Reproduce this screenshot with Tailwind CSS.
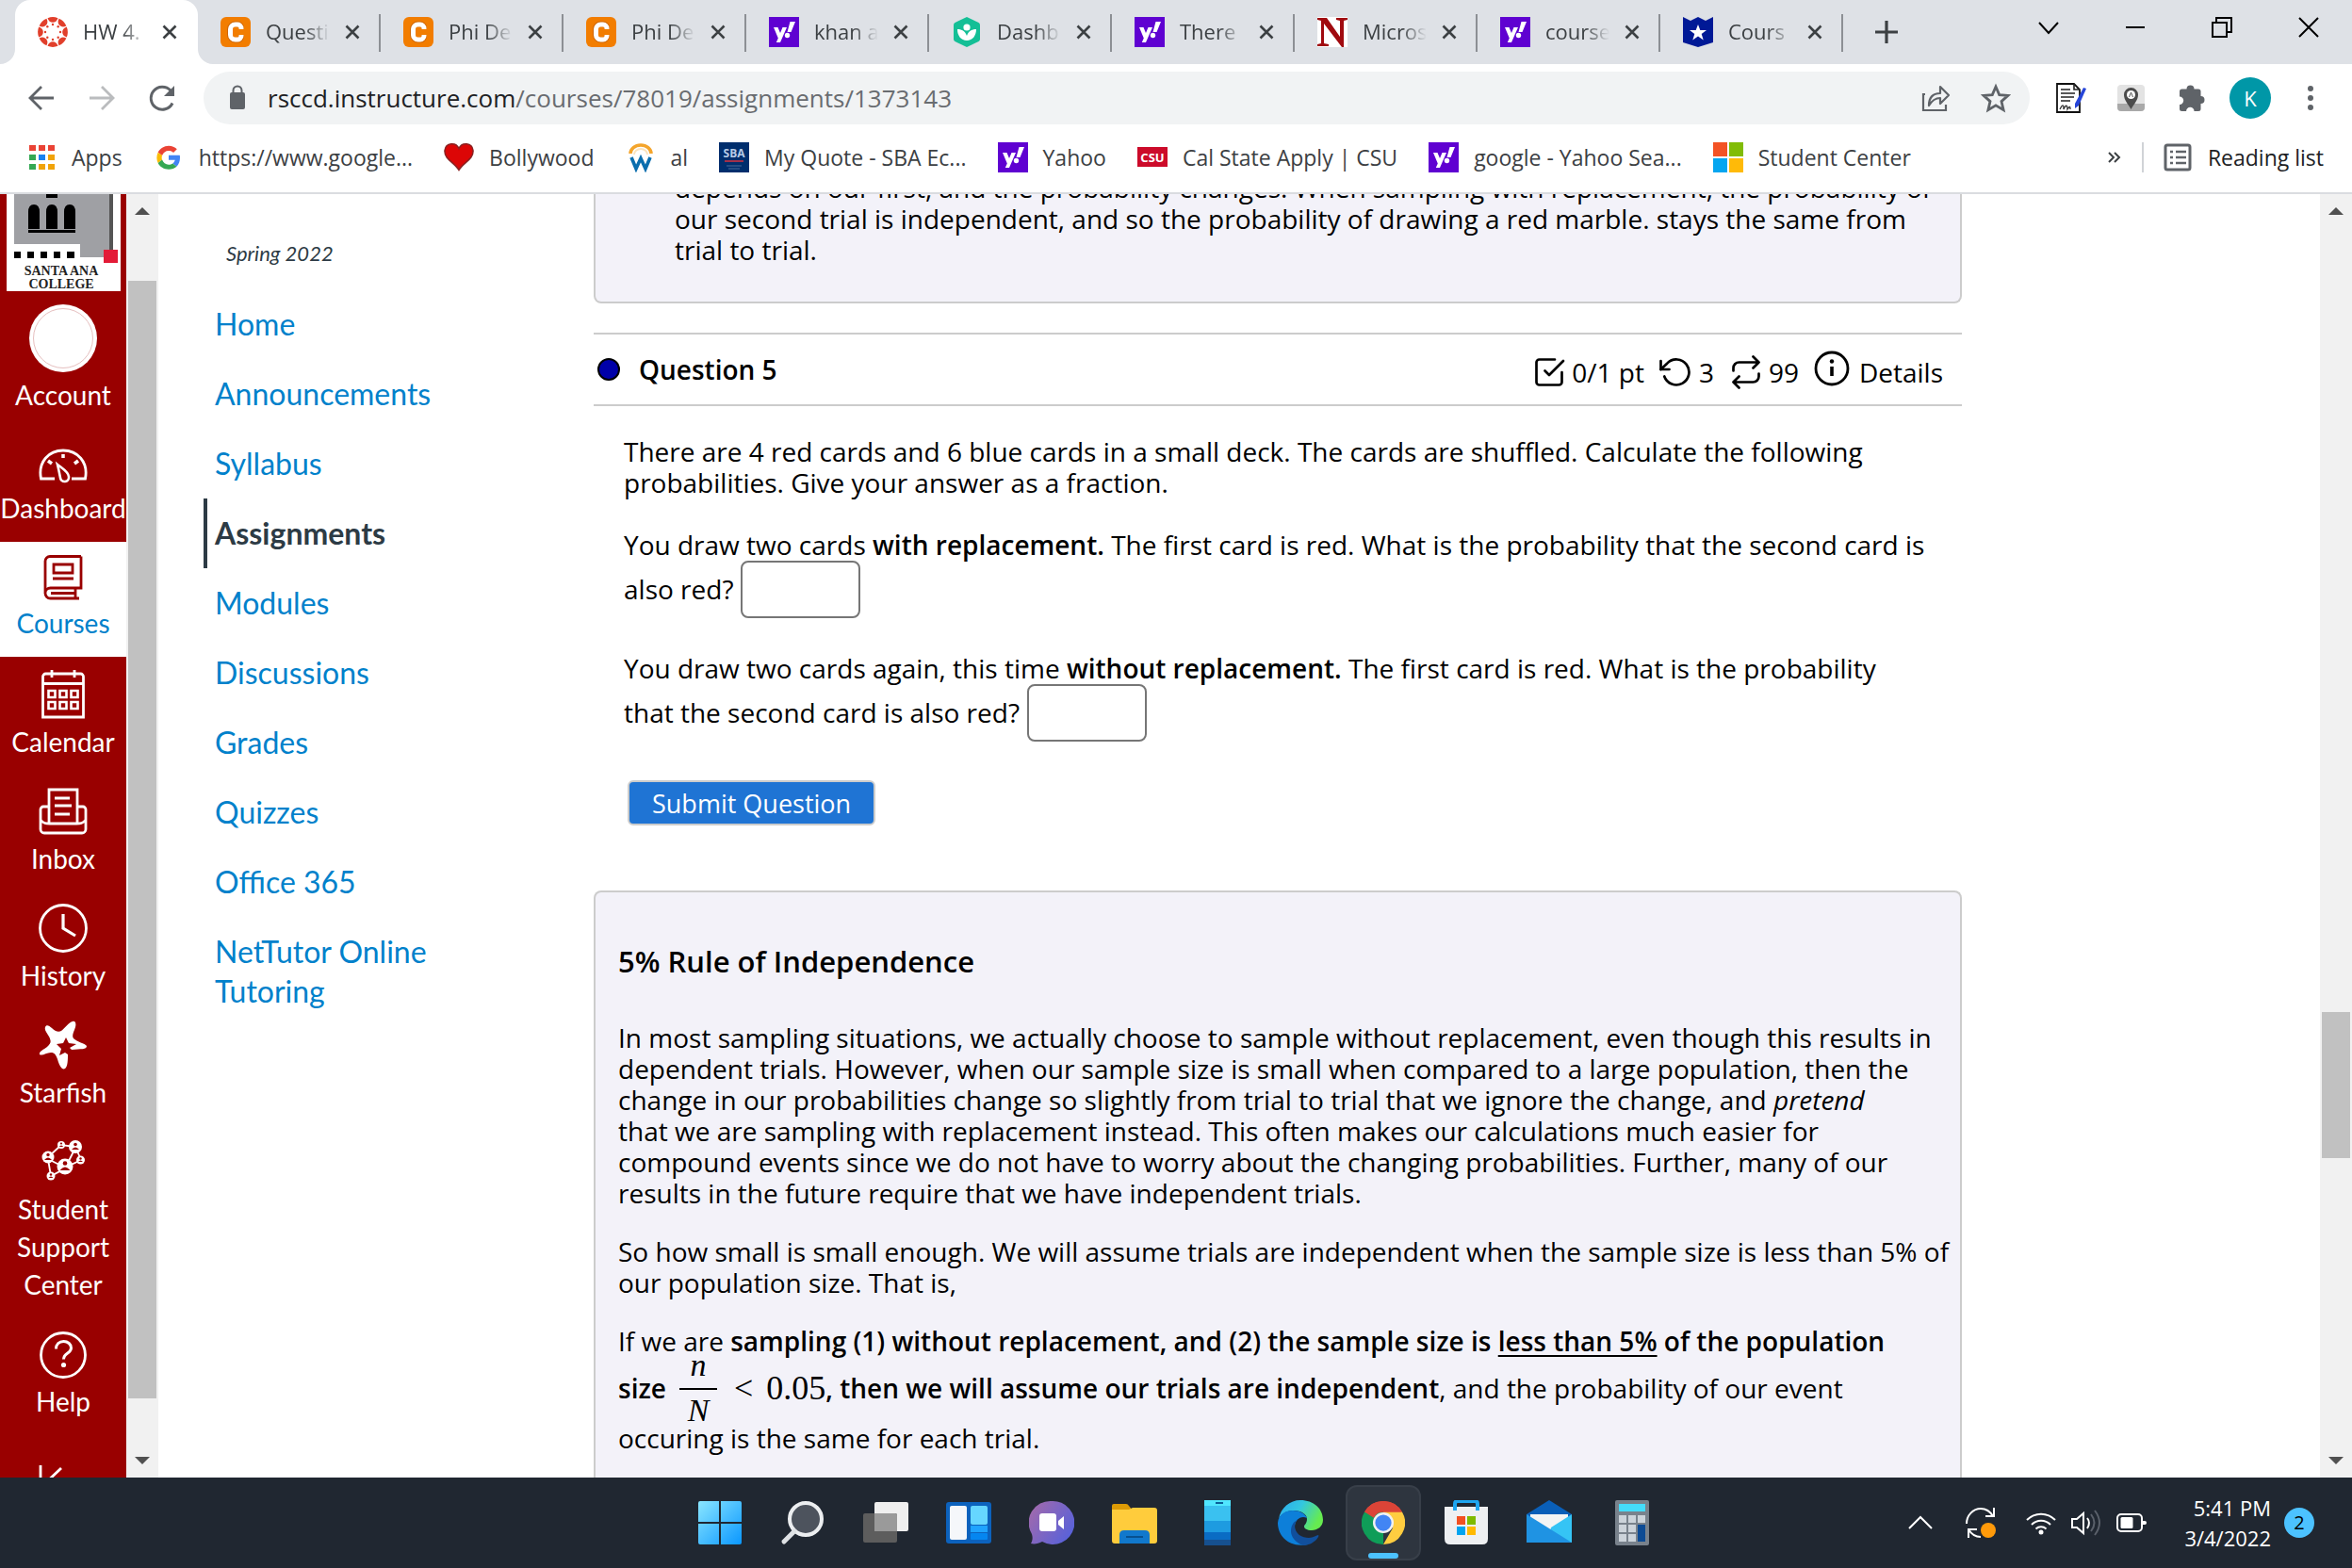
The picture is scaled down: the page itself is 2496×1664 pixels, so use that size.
<!DOCTYPE html>
<html lang="en">

<head>
    <meta charset="UTF-8">
    <meta name="viewport" content="width=device-width, initial-scale=1.0">
    <title>HW 4.2</title>
    <script src="https://cdn.jsdelivr.net/npm/@tailwindcss/browser@4"></script>
</head>

<body class="h-screen flex flex-col overflow-hidden bg-white font-['Open_Sans',sans-serif] text-[#3c4043]">

    <!-- shared icons -->
    <svg class="hidden">
        <symbol id="x" viewBox="0 0 16 16"><path d="M1.500 1.500l13 13M14.500 1.500l-13 13" stroke="#3c4043" stroke-width="2.600" fill="none" /></symbol>
        <symbol id="chegg" viewBox="0 0 32 32"><rect width="32" height="32" rx="6" fill="#f27d00" /><path d="M22 13V11.500a4 4 0 0 0-4-4h-2.500a5.500 5.500 0 0 0-5.500 5.500v6a5.500 5.500 0 0 0 5.500 5.500H18a4 4 0 0 0 4-4V19" stroke="#cf6500" stroke-width="6" fill="none" /><path d="M22 13V12a4 4 0 0 0-4-4h-2.500a5 5 0 0 0-5 5v6a5 5 0 0 0 5 5H18a4 4 0 0 0 4-4v-1" stroke="#fff" stroke-width="5" fill="none" /></symbol>
        <symbol id="yahoo" viewBox="0 0 32 32"><rect width="32" height="32" fill="#5f01d1" /><path d="M5 11h4.500l2.500 6 2.500-6H19l-7 16H7.800l2-4.500z M22.500 5H28l-4.500 11h-4z" fill="#fff" /><circle cx="19.500" cy="19.500" r="2.700" fill="#fff" /></symbol>
    </svg>

    <!-- tab strip -->
    <header class="h-[68px] shrink-0 bg-[#dee1e6] flex pl-4 text-[22px]">
        <div class="relative w-[194px] shrink-0 bg-white rounded-t-2xl flex items-center gap-4 pl-6 pr-[22px] pb-px">
            <svg class="absolute -left-4 bottom-0 size-4" viewBox="0 0 16 16"><path d="M16 0v16H0A16 16 0 0 0 16 0z" fill="#fff" /></svg>
            <svg class="absolute -right-4 bottom-0 size-4" viewBox="0 0 16 16"><path d="M0 0v16h16A16 16 0 0 1 0 0z" fill="#fff" /></svg>
            <svg class="size-8 shrink-0" viewBox="0 0 32 32">
                <g fill="#e13f2b">
                    <path id="seg" d="M10.500 1.200q5.500-2.200 11 0-1.500 4.600-5.500 4.600t-5.500-4.600z" />
                    <use href="#seg" transform="rotate(45 16 16)" /><use href="#seg" transform="rotate(90 16 16)" /><use href="#seg" transform="rotate(135 16 16)" /><use href="#seg" transform="rotate(180 16 16)" /><use href="#seg" transform="rotate(225 16 16)" /><use href="#seg" transform="rotate(270 16 16)" /><use href="#seg" transform="rotate(315 16 16)" />
                    <circle cx="16" cy="8" r="1.200" /><circle cx="21.700" cy="10.300" r="1.200" /><circle cx="24" cy="16" r="1.200" /><circle cx="21.700" cy="21.700" r="1.200" /><circle cx="16" cy="24" r="1.200" /><circle cx="10.300" cy="21.700" r="1.200" /><circle cx="8" cy="16" r="1.200" /><circle cx="10.300" cy="10.300" r="1.200" />
                </g>
            </svg>
            <span class="flex-1 min-w-0 whitespace-nowrap mask-r-from-60%">HW 4.</span>
            <button aria-label="Close tab" class="size-4 shrink-0"><svg class="size-4"><use href="#x" /></svg></button>
        </div>
        <div class="w-[194px] shrink-0 flex items-center gap-4 pl-6 pr-[22px] pb-px relative after:absolute after:right-0 after:top-[15px] after:h-10 after:w-0.5 after:bg-[#8c8f94]">
            <svg class="size-8 shrink-0"><use href="#chegg" /></svg>
            <span class="flex-1 min-w-0 whitespace-nowrap mask-r-from-60%">Questi</span>
            <button aria-label="Close tab" class="size-4 shrink-0"><svg class="size-4"><use href="#x" /></svg></button>
        </div>
        <div class="w-[194px] shrink-0 flex items-center gap-4 pl-6 pr-[22px] pb-px relative after:absolute after:right-0 after:top-[15px] after:h-10 after:w-0.5 after:bg-[#8c8f94]">
            <svg class="size-8 shrink-0"><use href="#chegg" /></svg>
            <span class="flex-1 min-w-0 whitespace-nowrap mask-r-from-60%">Phi De</span>
            <button aria-label="Close tab" class="size-4 shrink-0"><svg class="size-4"><use href="#x" /></svg></button>
        </div>
        <div class="w-[194px] shrink-0 flex items-center gap-4 pl-6 pr-[22px] pb-px relative after:absolute after:right-0 after:top-[15px] after:h-10 after:w-0.5 after:bg-[#8c8f94]">
            <svg class="size-8 shrink-0"><use href="#chegg" /></svg>
            <span class="flex-1 min-w-0 whitespace-nowrap mask-r-from-60%">Phi De</span>
            <button aria-label="Close tab" class="size-4 shrink-0"><svg class="size-4"><use href="#x" /></svg></button>
        </div>
        <div class="w-[194px] shrink-0 flex items-center gap-4 pl-6 pr-[22px] pb-px relative after:absolute after:right-0 after:top-[15px] after:h-10 after:w-0.5 after:bg-[#8c8f94]">
            <svg class="size-8 shrink-0"><use href="#yahoo" /></svg>
            <span class="flex-1 min-w-0 whitespace-nowrap mask-r-from-60%">khan a</span>
            <button aria-label="Close tab" class="size-4 shrink-0"><svg class="size-4"><use href="#x" /></svg></button>
        </div>
        <div class="w-[194px] shrink-0 flex items-center gap-4 pl-6 pr-[22px] pb-px relative after:absolute after:right-0 after:top-[15px] after:h-10 after:w-0.5 after:bg-[#8c8f94]">
            <svg class="size-8 shrink-0" viewBox="0 0 32 32"><path d="M16 0l12.500 6q1.500.8 1.500 2.500v15q0 1.700-1.500 2.500L16 32 3.500 26Q2 25.200 2 23.500v-15Q2 6.800 3.500 6z" fill="#14bf96" /><circle cx="16" cy="11" r="3.600" fill="#fff" /><path d="M6 13c5 0 8.500 2.500 10 7 1.500-4.500 5-7 10-7 0 7-4 12-10 12S6 20 6 13z" fill="#fff" /></svg>
            <span class="flex-1 min-w-0 whitespace-nowrap mask-r-from-60%">Dashb</span>
            <button aria-label="Close tab" class="size-4 shrink-0"><svg class="size-4"><use href="#x" /></svg></button>
        </div>
        <div class="w-[194px] shrink-0 flex items-center gap-4 pl-6 pr-[22px] pb-px relative after:absolute after:right-0 after:top-[15px] after:h-10 after:w-0.5 after:bg-[#8c8f94]">
            <svg class="size-8 shrink-0"><use href="#yahoo" /></svg>
            <span class="flex-1 min-w-0 whitespace-nowrap mask-r-from-60%">There</span>
            <button aria-label="Close tab" class="size-4 shrink-0"><svg class="size-4"><use href="#x" /></svg></button>
        </div>
        <div class="w-[194px] shrink-0 flex items-center gap-4 pl-6 pr-[22px] pb-px relative after:absolute after:right-0 after:top-[15px] after:h-10 after:w-0.5 after:bg-[#8c8f94]">
            <svg class="size-8 shrink-0" viewBox="0 0 32 32"><rect width="32" height="32" fill="#fff" /><path d="M0 1h10l14 20V4l-4-1V1h12v2l-4 1v28h-2L7 7v21l5 1v2H0v-2l4-1V4L0 3z" fill="#a00a0f" /></svg>
            <span class="flex-1 min-w-0 whitespace-nowrap mask-r-from-60%">Micros</span>
            <button aria-label="Close tab" class="size-4 shrink-0"><svg class="size-4"><use href="#x" /></svg></button>
        </div>
        <div class="w-[194px] shrink-0 flex items-center gap-4 pl-6 pr-[22px] pb-px relative after:absolute after:right-0 after:top-[15px] after:h-10 after:w-0.5 after:bg-[#8c8f94]">
            <svg class="size-8 shrink-0"><use href="#yahoo" /></svg>
            <span class="flex-1 min-w-0 whitespace-nowrap mask-r-from-60%">course</span>
            <button aria-label="Close tab" class="size-4 shrink-0"><svg class="size-4"><use href="#x" /></svg></button>
        </div>
        <div class="w-[194px] shrink-0 flex items-center gap-4 pl-6 pr-[22px] pb-px relative after:absolute after:right-0 after:top-[15px] after:h-10 after:w-0.5 after:bg-[#8c8f94]">
            <svg class="size-8 shrink-0" viewBox="0 0 32 32"><path d="M0 0l8 4 8-4 8 4 8-4v27l-16 5-16-5z" fill="#001996" /><path d="M16 8l2.300 6H25l-5.300 4 2 6.500L16 20.500l-5.700 4 2-6.500L7 14h6.700z" fill="#fff" /></svg>
            <span class="flex-1 min-w-0 whitespace-nowrap mask-r-from-60%">Cours</span>
            <button aria-label="Close tab" class="size-4 shrink-0"><svg class="size-4"><use href="#x" /></svg></button>
        </div>
        <button aria-label="New tab" class="ml-[34px] size-6 mt-[22px]"><svg viewBox="0 0 24 24"><path d="M12 0v24M0 12h24" stroke="#3c4043" stroke-width="3.200" /></svg></button>
        <div class="ml-auto flex gap-[70px] pr-[35px] pt-[18px]">
            <button aria-label="Search tabs" class="size-[22px]"><svg viewBox="0 0 22 22"><path d="M1 6l10 11L21 6" stroke="#000" stroke-width="2" fill="none" /></svg></button>
            <button aria-label="Minimize" class="size-[22px]"><svg viewBox="0 0 22 22"><path d="M1 11h20" stroke="#000" stroke-width="2" fill="none" /></svg></button>
            <button aria-label="Restore" class="size-[22px]"><svg viewBox="0 0 22 22"><path d="M1 6h15v15H1zM5 5.500V1h16v15h-4.500" stroke="#000" stroke-width="2" fill="none" /></svg></button>
            <button aria-label="Close" class="size-[22px]"><svg viewBox="0 0 22 22"><path d="M1 1l20 20M21 1L1 21" stroke="#000" stroke-width="2" fill="none" /></svg></button>
        </div>
    </header>

    <!-- toolbar -->
    <div class="h-[72px] shrink-0 flex items-center pl-7 pr-[30px]">
        <button aria-label="Back" class="size-8"><svg viewBox="0 0 32 32"><path d="M29 16H4M16 4L4 16l12 12" stroke="#5f6368" stroke-width="2.800" fill="none" /></svg></button>
        <button aria-label="Forward" class="size-8 ml-8"><svg viewBox="0 0 32 32"><path d="M3 16h25M16 4l12 12-12 12" stroke="#babcbe" stroke-width="2.800" fill="none" /></svg></button>
        <button aria-label="Reload" class="size-8 ml-8"><svg viewBox="0 0 32 32"><path d="M27 21.500A12 12 0 1 1 25 8" stroke="#5f6368" stroke-width="3" fill="none" /><path d="M29 3v11H18z" fill="#5f6368" /></svg></button>
        <div class="flex-1 h-14 ml-7 mr-7 rounded-full bg-[#f1f3f4] flex items-center pl-6 pr-5">
            <svg class="w-6 h-7" viewBox="0 0 24 28"><rect x="4" y="8" width="16" height="18" rx="2" fill="#5f6368" /><path d="M7.500 9V6a4.500 4.500 0 0 1 9 0v3" stroke="#5f6368" stroke-width="2" fill="none" /></svg>
            <p class="ml-5 text-[26px] text-[#696c70]"><span class="text-[#202124]">rsccd.instructure.com</span>/courses/78019/assignments/1373143</p>
            <button aria-label="Share" class="size-8 ml-auto"><svg viewBox="0 0 32 32"><path d="M5 12H3v17h24v-6" stroke="#5f6368" stroke-width="2.200" fill="none" /><path d="M9 24c0-8 4-13 12-13V4l9 9-9 9v-6c-6 0-9 3-12 8z" stroke="#5f6368" stroke-width="2.200" fill="none" stroke-linejoin="round" /></svg></button>
            <button aria-label="Bookmark this tab" class="size-8 ml-8"><svg viewBox="0 0 32 32"><path d="M16 4l3.700 8.600 9.300.8-7 6.200 2.100 9.100L16 23.800l-8.100 4.900L10 19.600l-7-6.200 9.300-.8z" stroke="#5f6368" stroke-width="2.800" fill="none" /></svg></button>
        </div>
        <svg class="size-8" viewBox="0 0 32 32"><path d="M1 1h18l6 6v24H1z" fill="#fff" stroke="#111" stroke-width="1.800" /><path d="M19 1v6h6M5 7h10M5 11h15M5 15h14M5 19h10" stroke="#222" stroke-width="1.600" fill="none" /><path d="M4 28c3-6 4-5 4 0 2-5 4-5 4 0 2-3 3-4 3 0" stroke="#333" stroke-width="1.300" fill="none" /><path d="M29 5l3 1-8 18-4 3v-5z" fill="#2645d8" /></svg>
        <svg class="size-8 ml-8" viewBox="0 0 32 32"><rect x="1" y="2" width="29" height="28" rx="4" fill="#e3e3e3" /><path d="M1 22h29v4a4 4 0 0 1-4 4H5a4 4 0 0 1-4-4z" fill="#a9a9a9" /><path d="M15.500 28C12 22 8 18 8 12.500a7.500 7.500 0 0 1 15 0C23 18 19 22 15.500 28z" fill="#4b4b4b" /><circle cx="15.500" cy="12.500" r="4.500" fill="#fff" /><path d="M13.500 15l2-5 2 5" stroke="#555" fill="none" /></svg>
        <svg class="size-8 ml-8" viewBox="0 0 32 32"><path d="M10.500 6.500a4 4 0 0 1 8 0H23a2.500 2.500 0 0 1 2.500 2.500v5a4 4 0 0 1 0 8v5.500A2.500 2.500 0 0 1 23 30h-4.500a4.200 4.200 0 0 0-8.400 0H5.500A2.500 2.500 0 0 1 3 27.500V23a4.200 4.200 0 0 0 0-8.400V9a2.500 2.500 0 0 1 2.500-2.500z" fill="#5f6368" /></svg>
        <button aria-label="Profile" class="size-11 ml-6 rounded-full bg-[#0097a7] text-white text-[22px]">K</button>
        <button aria-label="Menu" class="w-7 h-8 ml-7"><svg viewBox="0 0 28 32"><g fill="#5f6368"><circle cx="14" cy="6" r="3" /><circle cx="14" cy="16" r="3" /><circle cx="14" cy="26" r="3" /></g></svg></button>
    </div>

    <!-- bookmarks bar -->
    <nav class="h-[66px] shrink-0 border-b-2 border-[#dadce0] flex items-center gap-[33px] pl-7 pr-[30px] pb-2.5 text-[23px] whitespace-nowrap">
        <a href="#" class="flex items-center gap-4"><svg class="size-8" viewBox="0 0 32 32"><path d="M3 3h7v6H3zM13 3h7v6h-7zM23 3h7v6h-7z" fill="#ea4335" /><path d="M3 13h7v6H3zM3 23h7v6H3z" fill="#34a853" /><path d="M13 13h7v6h-7z" fill="#1a82f0" /><path d="M23 13h7v6h-7zM13 23h7v6h-7zM23 23h7v6h-7z" fill="#f0a30a" /></svg>Apps</a>
        <a href="#" class="flex items-center gap-4"><svg class="size-8" viewBox="0 0 48 48"><path fill="#ea4335" d="M24 13.500c3 0 5.500 1 7.500 3l5.700-5.700C33.700 7.500 29.300 5.500 24 5.500 16.500 5.500 10 9.800 7 16l6.600 5.100c1.500-4.500 5.600-7.600 10.400-7.600z" /><path fill="#4285f4" d="M42 24.500c0-1.300-.1-2.600-.4-3.800H24V28h10.100c-.5 2.300-1.800 4.300-3.700 5.600l6.300 4.900C40.300 35.100 42 30.200 42 24.500z" /><path fill="#fbbc05" d="M13.600 27.900c-.8-2.200-.8-4.600 0-6.800L7 16c-2.600 5.400-2.600 11.600 0 17z" /><path fill="#34a853" d="M24 43c5.100 0 9.400-1.600 12.700-4.500l-6.300-4.900c-1.700 1.200-3.900 1.900-6.400 1.900-4.800 0-8.900-3.100-10.400-7.600L7 33c3 6.100 9.500 10 17 10z" /></svg>https://www.google...</a>
        <a href="#" class="flex items-center gap-4"><svg class="size-8" viewBox="0 0 32 32"><path d="M16 29.500C12 22 0 18 1 8.500 2 0 13-.5 16 6.500 19-.5 30 0 31 8.500c1 9.500-11 13.500-15 21z" fill="#dc0606" stroke="#8a2020" stroke-width="1.500" /></svg>Bollywood</a>
        <a href="#" class="flex items-center gap-4"><svg class="size-8" viewBox="0 0 32 32"><path d="M5 12a11 9 0 0 1 22 0" stroke="#f4a52c" stroke-width="3.500" fill="none" /><path d="M9 13a7 6 0 0 1 14 0" stroke="#fbe3bd" stroke-width="2" fill="none" /><path d="M6 16l5 12 5-11 5 11 5-12" stroke="#0b6eae" stroke-width="3.600" fill="none" /></svg>al</a>
        <a href="#" class="flex items-center gap-4"><svg class="size-8" viewBox="0 0 32 32"><rect width="32" height="32" fill="#002e6d" /><text x="16" y="16" text-anchor="middle" font-size="12" font-weight="bold" fill="#b9cbe6">SBA</text><path d="M6 20h20" stroke="#a1304a" stroke-width="2" /><path d="M8 25h16M10 28h12" stroke="#4b6c9b" /></svg>My Quote - SBA Ec...</a>
        <a href="#" class="flex items-center gap-4"><svg class="size-8"><use href="#yahoo" /></svg>Yahoo</a>
        <a href="#" class="flex items-center gap-4"><svg class="size-8" viewBox="0 0 32 32"><rect y="5" width="32" height="21" fill="#cc0b2a" /><text x="16" y="21" text-anchor="middle" font-size="13" font-weight="bold" fill="#fff">CSU</text></svg>Cal State Apply | CSU</a>
        <a href="#" class="flex items-center gap-4"><svg class="size-8"><use href="#yahoo" /></svg>google - Yahoo Sea...</a>
        <a href="#" class="flex items-center gap-4"><svg class="size-8" viewBox="0 0 32 32"><path d="M0 0h15v15H0z" fill="#f35325" /><path d="M17 0h15v15H17z" fill="#81bc06" /><path d="M0 17h15v15H0z" fill="#05a6f0" /><path d="M17 17h15v15H17z" fill="#ffba08" /></svg>Student Center</a>
        <button aria-label="More bookmarks" class="ml-auto"><svg class="w-4 h-3" viewBox="0 0 16 12"><path d="M2 1l5 5-5 5M8 1l5 5-5 5" stroke="#3c4043" stroke-width="2" fill="none" /></svg></button>
        <button class="flex items-center gap-4 border-l-2 border-[#d0d3d7] pl-5 -ml-3 h-8 text-[#202124]"><svg class="size-8" viewBox="0 0 32 32"><rect x="3" y="3" width="26" height="26" rx="2" fill="none" stroke="#5f6368" stroke-width="3" /><path d="M8 10h3M8 16h3M8 22h3M14 10h11M14 16h11M14 22h11" stroke="#5f6368" stroke-width="2.400" /></svg>Reading list</button>
    </nav>

    <div class="flex-1 min-h-0 flex overflow-hidden">

        <!-- global navigation -->
        <nav class="w-[134px] shrink-0 overflow-hidden bg-[#990000] text-white text-center text-[28px] leading-10 font-[Lato,sans-serif]">
            <svg class="block w-[121px] h-[103px] ml-[7px]" viewBox="0 0 121 103">
                <rect width="121" height="103" fill="#fff" />
                <path d="M8 0h103v67H78V53H8z" fill="#9fa0a4" />
                <path d="M109 0h4v60h-4z" fill="#555" />
                <path d="M42 0h12v4H42z" fill="#000" />
                <path d="M23 37V19q0-8 6-8t6 8v18zM42 37V19q0-8 6-8t6 8v18zM61 37V19q0-8 6-8t6 8v18zM23 38h50v3H23z" fill="#000" />
                <path d="M8 61h7v7H8zM22 61h7v7h-7zM36 61h7v7h-7zM50 61h7v7h-7zM64 61h8v7h-8z" fill="#000" />
                <rect x="103" y="59" width="15" height="14" fill="#e31b37" />
                <text x="58" y="86" text-anchor="middle" font-family="Liberation Serif" font-weight="bold" font-size="14" fill="#222">SANTA ANA</text>
                <text x="58" y="100" text-anchor="middle" font-family="Liberation Serif" font-weight="bold" font-size="14" fill="#222">COLLEGE</text>
            </svg>
            <a href="#" class="block py-3.5">
                <span class="block size-[72px] mx-auto mb-1 rounded-full bg-white p-1"><span class="block size-full rounded-full border border-[#e6bfbf]"></span></span>
                Account
            </a>
            <a href="#" class="block pt-3.5 pb-4">
                <svg class="h-12 w-[52px] mx-auto mb-1" viewBox="0 0 52 48"><path d="M17 41H2.500C-1 23 11 11 26 11s27 12 23.500 30H35" stroke="#fff" stroke-width="2.800" fill="none" /><path d="M20 26c5 4 12 8 12 13a4.500 4.500 0 0 1-9 1c-1-5-2-10-3-14z" stroke="#fff" stroke-width="2.600" fill="none" /><path d="M26 15v4M10 22l4 3M42 22l-4 3" stroke="#fff" stroke-width="3.500" /></svg>
                Dashboard
            </a>
            <a href="#" class="block pt-3.5 pb-4 bg-white text-[#0081cb]">
                <svg class="h-12 w-[42px] mx-auto mb-1" viewBox="0 0 42 48"><path d="M40 1.500H7a5 5 0 0 0-5 5V41M40 1.500V35H7.500a5.500 5.500 0 0 0 0 11H38M34 35v11M8 40.500h26" stroke="#900" stroke-width="2.800" fill="none" /><path d="M11 10h20v9H11zM10 25h22" stroke="#900" stroke-width="2.800" fill="none" /></svg>
                Courses
            </a>
            <a href="#" class="block py-3.5">
                <svg class="h-[52px] w-[46px] mx-auto mb-1" viewBox="0 0 46 52"><path d="M1.500 7a3 3 0 0 1 3-3h37a3 3 0 0 1 3 3v43h-43zM1.500 14.500h43M11 0v8M35 0v8" stroke="#fff" stroke-width="2.800" fill="none" /><path d="M7.500 22h7v7h-7zM19.500 22h7v7h-7zM31.500 22h7v7h-7zM7.500 34h7v7h-7zM19.500 34h7v7h-7zM31.500 34h7v7h-7z" stroke="#fff" stroke-width="2.600" fill="none" /></svg>
                Calendar
            </a>
            <a href="#" class="block py-3.5">
                <svg class="h-[52px] w-[52px] mx-auto mb-1" viewBox="0 0 52 52"><path d="M11 38V3h30v35M11 21H5a3 3 0 0 0-3 3v21a4 4 0 0 0 4 4h40a4 4 0 0 0 4-4V24a3 3 0 0 0-3-3h-6M2 35c3 4 6 4 10 4h28c4 0 7 0 10-4" stroke="#fff" stroke-width="2.800" fill="none" /><path d="M17 12h16M17 20h18M17 29h16" stroke="#fff" stroke-width="2.800" /></svg>
                Inbox
            </a>
            <a href="#" class="block py-3.5">
                <svg class="h-[52px] w-[52px] mx-auto mb-1" viewBox="0 0 52 52"><circle cx="26" cy="26" r="24.500" stroke="#fff" stroke-width="2.800" fill="none" /><path d="M26 11v15l13 8" stroke="#fff" stroke-width="3.200" fill="none" /></svg>
                History
            </a>
            <a href="#" class="block py-3.5">
                <svg class="h-[52px] w-[52px] mx-auto mb-1" viewBox="0 0 52 52"><path d="M7 7C8 4 11 5 14 8C17 11 21 13 24 11C28 8 32 2 36 1C39 0 40 3 39 7C37 13 35 16 37 19C41 23 49 24 51 27C51 31 45 30 35 31L33 29L40 25L32 24L29 18L26 24L19 25L24 30L22 37L28 34L31 36C31 41 31 49 28 51C25 53 22 48 20 41C18 35 16 34 13 34C8 34 4 38 1 36C0 33 5 31 9 28C14 24 13 21 11 17C8 12 6 10 7 7z" fill="#fff" /></svg>
                Starfish
            </a>
            <a href="#" class="block py-3.5">
                <svg class="h-[52px] w-[46px] mx-auto mb-1" viewBox="0 0 46 52">
                    <path d="M7 21L21 8l15 2 6 14-17 8-18-9 3 18 15-8 11-22" stroke="#fff" stroke-width="1.800" fill="none" />
                    <g fill="#fff"><circle cx="7" cy="21" r="6.500" /><circle cx="21" cy="8" r="4" /><circle cx="36" cy="10" r="7" /><circle cx="41.500" cy="24" r="4.500" /><circle cx="25" cy="31" r="8.500" /><circle cx="10" cy="41" r="4.500" /></g>
                    <g fill="#900"><circle cx="7" cy="18.500" r="1.700" /><path d="M3 24q4-5 8 0z" /><circle cx="36" cy="7.500" r="1.800" /><path d="M32 13q4-5 8 0z" /><circle cx="25" cy="27.500" r="2.300" /><path d="M19.500 35q5.500-7 11 0z" /><circle cx="41.500" cy="22.500" r="1.200" /><path d="M39 26q2.500-3 5 0z" /><circle cx="10" cy="39.500" r="1.200" /><path d="M7.500 43q2.500-3 5 0z" /><circle cx="21" cy="6.500" r="1.100" /><path d="M18.800 10q2.200-3 4.400 0z" /></g>
                </svg>
                Student<br>Support<br>Center
            </a>
            <a href="#" class="block py-4">
                <svg class="h-[50px] w-[50px] mx-auto mb-1" viewBox="0 0 50 50"><circle cx="25" cy="25" r="23.500" stroke="#fff" stroke-width="2.800" fill="none" /><path d="M17.500 18.500c0-5 3.500-8 8-8s8 3 8 7c0 6-8 5-8 12" stroke="#fff" stroke-width="3" fill="none" /><circle cx="25.500" cy="35.500" r="2.600" fill="#fff" /></svg>
                Help
            </a>
            <button aria-label="Minimize global navigation" class="block w-[52px] mx-auto pt-8"><svg class="size-[52px]" viewBox="0 0 52 52"><path d="M2 0v50M24 3L6 20l18 17M6 20h44" stroke="#fff" stroke-width="2.800" fill="none" /></svg></button>
        </nav>

        <!-- inner scrollbar -->
        <div class="w-[34px] shrink-0 bg-[#f1f1f1] flex flex-col items-center pt-3.5 pb-3.5">
            <svg class="w-4 h-2" viewBox="0 0 16 8"><path d="M0 8l8-8 8 8z" fill="#505050" /></svg>
            <div class="w-[30px] flex-1 mt-[70px] mb-[62px] bg-[#c1c1c1]"></div>
            <svg class="w-4 h-2" viewBox="0 0 16 8"><path d="M0 0l8 8 8-8z" fill="#505050" /></svg>
        </div>

        <!-- course menu -->
        <nav class="w-[462px] shrink-0 pl-12 pt-[47px] font-[Lato,sans-serif] text-[32px] leading-[42px] text-[#0081cb]">
            <p class="pl-6 mb-[22px] text-[22px] leading-8 italic text-[#2d3b45]">Spring 2022</p>
            <ul class="w-[250px]">
                <li><a href="#" class="block py-4 pl-3">Home</a></li>
                <li><a href="#" class="block py-4 pl-3">Announcements</a></li>
                <li><a href="#" class="block py-4 pl-3">Syllabus</a></li>
                <li><a href="#" class="block py-4 pl-2 border-l-4 border-[#2d3b45] text-[#2d3b45] font-bold">Assignments</a></li>
                <li><a href="#" class="block py-4 pl-3">Modules</a></li>
                <li><a href="#" class="block py-4 pl-3">Discussions</a></li>
                <li><a href="#" class="block py-4 pl-3">Grades</a></li>
                <li><a href="#" class="block py-4 pl-3">Quizzes</a></li>
                <li><a href="#" class="block py-4 pl-3">Office 365</a></li>
                <li><a href="#" class="block py-4 pl-3">NetTutor Online Tutoring</a></li>
            </ul>
        </nav>

        <!-- assignment -->
        <main class="flex-1 min-w-0 overflow-hidden text-black text-[28px] leading-[33px] whitespace-nowrap">
            <div class="max-w-[1452px]">
                <section class="-mt-[23px] border-2 border-t-0 border-[#ccc] rounded-b-lg bg-[#f3f2f9] pl-[84px] pb-[38px]">
                    <p>depends on our first, and the probability changes. When sampling with replacement, the probability of<br>
                        our second trial is independent, and so the probability of drawing a red marble. stays the same from<br>
                        trial to trial.</p>
                </section>

                <div class="mt-[31px] h-[78px] border-y-2 border-[#ccc] flex items-center pl-1 pr-5">
                    <span class="size-6 rounded-full bg-[#0000a8] border-2 border-black"></span>
                    <h2 class="ml-5 font-semibold">Question 5</h2>
                    <div class="ml-auto flex items-center gap-4 pt-1.5">
                        <span class="flex items-center gap-1.5"><svg class="size-9" viewBox="0 0 24 24" fill="none" stroke="#000" stroke-width="1.800" stroke-linecap="round" stroke-linejoin="round"><path d="M9 11l3 3L22 4M21 12v7a2 2 0 0 1-2 2H5a2 2 0 0 1-2-2V5a2 2 0 0 1 2-2h11" /></svg>0/1 pt</span>
                        <span class="flex items-center gap-1.5"><svg class="size-9" viewBox="0 0 24 24" fill="none" stroke="#000" stroke-width="1.800" stroke-linecap="round" stroke-linejoin="round"><path d="M1 4v6h6" /><path d="M3.500 15a9 9 0 1 0 2.100-9.400L1 10" /></svg>3</span>
                        <span class="flex items-center gap-1.5"><svg class="size-9" viewBox="0 0 24 24" fill="none" stroke="#000" stroke-width="1.800" stroke-linecap="round" stroke-linejoin="round"><path d="M17 1l4 4-4 4M3 11V9a4 4 0 0 1 4-4h14M7 23l-4-4 4-4M21 13v2a4 4 0 0 1-4 4H3" /></svg>99</span>
                        <button class="flex items-center gap-2.5"><svg class="size-[38px] mb-2" viewBox="0 0 38 38"><circle cx="19" cy="19" r="17" fill="none" stroke="#000" stroke-width="2.800" /><path d="M19 17v10" stroke="#000" stroke-width="3.600" /><circle cx="19" cy="11.500" r="2.200" /></svg>Details</button>
                    </div>
                </div>

                <form class="px-8 pt-8">
                    <p>There are 4 red cards and 6 blue cards in a small deck. The cards are shuffled. Calculate the following<br>
                        probabilities. Give your answer as a fraction.</p>
                    <p class="mt-[33px]">You draw two cards <b class="font-semibold">with replacement.</b> The first card is red. What is the probability that the second card is</p>
                    <div class="flex items-center gap-2">
                        <label for="a1">also red?</label>
                        <input id="a1" type="text" class="w-[127px] h-[61px] border-2 border-[#767676] rounded-lg bg-white">
                    </div>
                    <p class="mt-[37px]">You draw two cards again, this time <b class="font-semibold">without replacement.</b> The first card is red. What is the probability</p>
                    <div class="flex items-center gap-2">
                        <label for="a2">that the second card is also red?</label>
                        <input id="a2" type="text" class="w-[127px] h-[61px] border-2 border-[#767676] rounded-lg bg-white">
                    </div>
                    <button type="button" class="mt-[41px] ml-1 px-6 h-12 block rounded-md bg-[#1f74d4] border-2 border-[#ccc] text-white text-[27px]">Submit Question</button>
                </form>

                <section class="mt-[69px] border-2 border-b-0 border-[#ccc] rounded-t-lg bg-[#f3f2f9] pl-6 pt-[55px] pb-20">
                    <h2 class="text-[31px] leading-9 font-semibold">5% Rule of Independence</h2>
                    <p class="mt-[47px]">In most sampling situations, we actually choose to sample without replacement, even though this results in<br>
                        dependent trials. However, when our sample size is small when compared to a large population, then the<br>
                        change in our probabilities change so slightly from trial to trial that we ignore the change, and <i>pretend</i><br>
                        that we are sampling with replacement instead. This often makes our calculations much easier for<br>
                        compound events since we do not have to worry about the changing probabilities. Further, many of our<br>
                        results in the future require that we have independent trials.</p>
                    <p class="mt-[29px]">So how small is small enough. We will assume trials are independent when the sample size is less than 5% of<br>
                        our population size. That is,</p>
                    <p class="mt-[29px]">If we are <b class="font-semibold">sampling (1) without replacement, and (2) the sample size is <u class="underline-offset-4">less than 5%</u> of the population</b></p>
                    <div class="flex items-center h-[66px] mb-1">
                        <b class="font-semibold">size</b>
                        <span class="mx-3.5 w-10 flex flex-col text-center italic text-[34px] leading-8 font-['Liberation_Serif',serif]"><span class="border-b-2 border-black pb-2">n</span><span class="pt-1.5">N</span></span>
                        <span class="flex gap-3.5 ml-1 font-['Liberation_Serif',serif] text-[36px]"><span>&lt;</span><span>0.05</span></span><span><b class="font-semibold">, then we will assume our trials are independent</b>, and the probability of our event</span>
                    </div>
                    <p>occuring is the same for each trial.</p>
                </section>
            </div>
        </main>

        <!-- page scrollbar -->
        <div class="w-[34px] shrink-0 bg-[#f1f1f1] flex flex-col items-center pt-3.5 pb-3.5">
            <svg class="w-4 h-2" viewBox="0 0 16 8"><path d="M0 8l8-8 8 8z" fill="#505050" /></svg>
            <div class="flex-[845]"></div>
            <div class="w-[30px] h-[155px] bg-[#c1c1c1]"></div>
            <div class="flex-[317]"></div>
            <svg class="w-4 h-2" viewBox="0 0 16 8"><path d="M0 0l8 8 8-8z" fill="#505050" /></svg>
        </div>
    </div>

    <!-- taskbar -->
    <footer class="h-24 shrink-0 bg-[#202731] grid grid-cols-[1fr_auto_1fr] items-center text-white">
        <div></div>
        <div class="flex">
            <button aria-label="Start" class="w-[88px] h-20 grid place-items-center"><svg class="size-12" viewBox="0 0 48 48"><defs><linearGradient id="win" x1="0" y1="0" x2="1" y2="1"><stop offset="0" stop-color="#8ae6ff" /><stop offset="1" stop-color="#0a97ff" /></linearGradient></defs><path d="M3 1h20v22H1V3q0-2 2-2zM25 1h20q2 0 2 2v20H25zM1 25h22v22H3q-2 0-2-2zM25 25h22v20q0 2-2 2H25z" fill="url(#win)" /></svg></button>
            <button aria-label="Search" class="w-[88px] h-20 grid place-items-center"><svg class="size-12" viewBox="0 0 48 48"><circle cx="27" cy="20" r="17" fill="#4d535d" stroke="#eceef0" stroke-width="4" /><path d="M15 33L4 44" stroke="#dfe2e5" stroke-width="5" stroke-linecap="round" /></svg></button>
            <button aria-label="Task view" class="w-[88px] h-20 grid place-items-center"><svg class="size-12" viewBox="0 0 48 48"><rect x="12" y="2" width="36" height="31" rx="2" fill="#efefef" /><rect y="14" width="36" height="31" rx="2" fill="#5d5d5d" /><path d="M12 14h22q2 0 2 2v17H12z" fill="#9a9a9a" /></svg></button>
            <button aria-label="Widgets" class="w-[88px] h-20 grid place-items-center"><svg class="size-12" viewBox="0 0 48 48"><rect y="2" width="48" height="44" rx="3" fill="#0c62bd" /><rect x="4" y="6" width="18" height="36" rx="2" fill="#f5f7fa" /><rect x="26" y="6" width="18" height="20" rx="2" fill="#66d6ff" /><rect x="26" y="27" width="18" height="7" fill="#1fa3ff" /><rect x="26" y="35" width="18" height="7" rx="1" fill="#0586f0" /></svg></button>
            <button aria-label="Chat" class="w-[88px] h-20 grid place-items-center"><svg class="size-12" viewBox="0 0 48 48"><defs><linearGradient id="chat" x1="0" y1="0" x2="1" y2="0.600"><stop offset="0" stop-color="#a86aa8" /><stop offset="1" stop-color="#5b62d8" /></linearGradient></defs><path d="M24 1a23 23 0 1 1-10 43c-4 2-8 3-12 2 2-3 2-7 1-10A23 23 0 0 1 24 1z" fill="url(#chat)" /><rect x="11" y="14" width="18" height="19" rx="3" fill="#fff" /><path d="M31 22l6-5v14l-6-5z" fill="#fff" /></svg></button>
            <button aria-label="File Explorer" class="w-[88px] h-20 grid place-items-center"><svg class="size-12" viewBox="0 0 48 48"><path d="M0 6q0-2 2-2h13q2 0 3 2l4 5H0z" fill="#dc9a05" /><path d="M0 10h18l4-2h23q3 0 3 3v32q0 3-3 3H3q-3 0-3-3z" fill="#ffcc3c" /><path d="M8 46V37q0-5 5-5h22q5 0 5 5v9z" fill="#1178cc" /><path d="M15 39h18" stroke="#07508f" stroke-width="2" /></svg></button>
            <button aria-label="Your Phone" class="w-[88px] h-20 grid place-items-center"><svg class="size-12" viewBox="0 0 48 48"><path d="M10 0h28v7H10z" fill="#50e6ff" /><path d="M10 6h28v17H10z" fill="#3ac1f0" /><path d="M10 22h28v13H10z" fill="#1e9be0" /><path d="M10 34h28v9H10z" fill="#0a6cc4" /><path d="M10 42h28v6H10z" fill="#16508f" /><path d="M22 3h8" stroke="#0a5f9a" stroke-width="2" /></svg></button>
            <button aria-label="Edge" class="w-[88px] h-20 grid place-items-center"><svg class="size-12" viewBox="0 0 48 48"><defs><linearGradient id="edge" x1="0" y1="0" x2="1" y2="0.400"><stop offset="0" stop-color="#2aa9ee" /><stop offset="0.500" stop-color="#33c7e0" /><stop offset="1" stop-color="#66eb50" /></linearGradient></defs><path d="M1 20C3 8 13 0 24 0c14 0 24 9 24 21 0 7-6 11-12 11-5 0-8-2-8-4s3-3 3-8c0-5-6-9-14-9-8 0-14 4-16 9z" fill="url(#edge)" /><path d="M0 24C1 15 8 11 16 11c7 0 13 3 15 8-6-3-13 1-13 10 0 9 6 17 14 18-20 4-32-9-32-23z" fill="#0d7fd9" /><path d="M18 27c0 9 8 13 15 13 5 0 8-3 10-3 2 1-5 11-16 11-9-3-13-10-13-15 0-5 2-10 7-12-2 2-3 4-3 6z" fill="#114f9c" /></svg></button>
            <button aria-label="Chrome" class="relative w-20 h-20 mx-1 grid place-items-center rounded-xl bg-[#2e353f] border-2 border-[#383f49]"><svg class="size-[46px]" viewBox="0 0 48 48"><path d="M24 24L3.200 12A24 24 0 0 1 44.800 12z" fill="#db4437" /><path d="M24 24L24 48A24 24 0 0 1 3.200 12z" fill="#0f9d58" /><path d="M24 12h20.800A24 24 0 0 1 24 48l10.400-18z" fill="#ffcd40" /><path d="M3.200 12L13.600 30 24 24V12z" fill="#0f9d58" /><path d="M3.200 12A24 24 0 0 1 44.800 12H24a12 12 0 0 0-10.500 6.500z" fill="#db4437" /><circle cx="24" cy="24" r="11.500" fill="#f1f1f1" /><circle cx="24" cy="24" r="9" fill="#4285f4" /></svg><span class="absolute bottom-0 w-8 h-1.5 rounded-full bg-[#4cc2ff]"></span></button>
            <button aria-label="Microsoft Store" class="w-[88px] h-20 grid place-items-center"><svg class="size-12" viewBox="0 0 48 48"><path d="M12 10V4q0-3 3-3h18q3 0 3 3v6" stroke="#1fa6f0" stroke-width="4" fill="none" /><path d="M1 7h46v34q0 6-6 6H7q-6 0-6-6z" fill="#eef0f2" /><path d="M10 7h4v4h-4zM34 7h4v4h-4z" fill="#1fa6f0" /><path d="M14 17h9v9h-9z" fill="#f25022" /><path d="M25 17h9v9h-9z" fill="#7fba00" /><path d="M14 28h9v9h-9z" fill="#00a4ef" /><path d="M25 28h9v9h-9z" fill="#ffb900" /></svg></button>
            <button aria-label="Mail" class="w-[88px] h-20 grid place-items-center"><svg class="size-12" viewBox="0 0 48 48"><path d="M0 15L24 0l24 15v6H0z" fill="#0a5fb8" /><path d="M4 15h40v20H4z" fill="#f4f4f4" /><path d="M48 15v30H22l4-16z" fill="#35c4f5" /><path d="M0 15l48 30H0z" fill="#1f93e3" /></svg></button>
            <button aria-label="Calculator" class="w-[88px] h-20 grid place-items-center"><svg class="size-12" viewBox="0 0 48 48"><rect x="6" width="36" height="48" rx="2" fill="#79828c" /><rect x="10" y="4" width="28" height="8" fill="#45dcfa" /><path d="M10 16h8v8h-8zM20 16h8v8h-8zM30 16h8v8h-8zM10 26h8v8h-8zM20 26h8v8h-8zM10 36h8v8h-8zM20 36h8v8h-8z" fill="#ccd3da" /><path d="M30 26h8v18h-8z" fill="#0d4b94" /></svg></button>
        </div>
        <div class="flex items-center justify-end pr-10">
            <button aria-label="Show hidden icons" class="w-7 mr-[34px]"><svg viewBox="0 0 28 16"><path d="M2 14L14 2l12 12" stroke="#fff" stroke-width="2" fill="none" /></svg></button>
            <svg class="size-8 mr-8" viewBox="0 0 32 32"><path d="M1 17C1 8 8 1 16 1c6 0 10 3 13 8M30 0v9h-9M16 31C11 31 6 28 3 23M3 32v-9h9" stroke="#fff" stroke-width="2" fill="none" /><circle cx="24" cy="24" r="8" fill="#ff9a0a" /></svg>
            <svg class="size-8 mr-4" viewBox="0 0 32 32"><path d="M1 13a21 21 0 0 1 30 0M6 18a14 14 0 0 1 20 0M10.500 22.500a8 8 0 0 1 11 0" stroke="#fff" stroke-width="2" fill="none" /><circle cx="16" cy="26" r="2.500" fill="#fff" /></svg>
            <svg class="size-8 mr-4" viewBox="0 0 32 32"><path d="M1 12h5l7-6v21l-7-6H1z" stroke="#fff" stroke-width="2" fill="none" /><path d="M17 11q4 5 0 11" stroke="#fff" stroke-width="2" fill="none" /><path d="M21 7q7 9 0 18M25 3q10 13 0 26" stroke="#5a606a" stroke-width="2" fill="none" /></svg>
            <svg class="size-8" viewBox="0 0 32 32"><rect x="1" y="7" width="26" height="18" rx="4" stroke="#fff" stroke-width="2" fill="none" /><rect x="4.500" y="10" width="13" height="12" rx="1.500" fill="#fff" /><path d="M28 14h2q2 0 2 2t-2 2h-2z" fill="#fff" /></svg>
            <p class="ml-10 text-right text-[22px] leading-8">5:41 PM<br>3/4/2022</p>
            <span class="ml-3.5 size-8 rounded-full bg-[#4cc2ff] text-black text-[20px] leading-8 text-center">2</span>
        </div>
    </footer>

</body>

</html>
